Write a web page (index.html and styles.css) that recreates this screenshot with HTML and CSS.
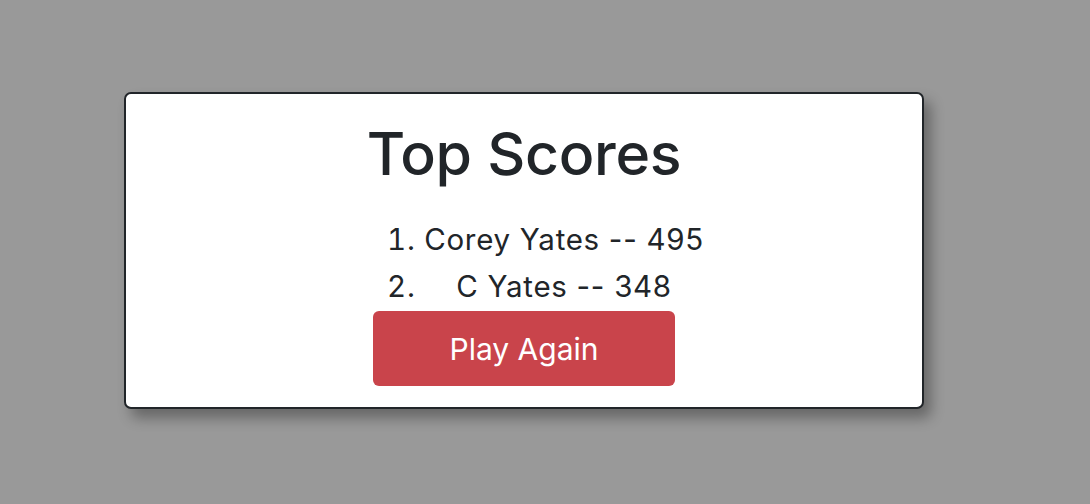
FILE: index.html
```html
<!DOCTYPE html>
<html>
<head>
<meta charset="utf-8">
<link rel="stylesheet" href="styles.css">
</head>
<body>
<div class="page">
  <div class="card">
    <h1 class="title">Top Scores</h1>
    <ol class="scores">
      <li>Corey Yates -- 495</li>
      <li>C Yates -- 348</li>
    </ol>
    <button class="btn-play">Play Again</button>
  </div>
</div>
</body>
</html>
```

FILE: styles.css
```css
html, body {
  margin: 0;
  padding: 0;
  background: #999999;
  font-family: Inter, "Liberation Sans", sans-serif;
  color: #212529;
}
.page {
  width: 1090px;
  height: 504px;
  padding-top: 92px;
  padding-left: 124px;
  box-sizing: border-box;
}
.card {
  width: 800px;
  height: 317px;
  box-sizing: border-box;
  background: #ffffff;
  border: 2px solid #212529;
  border-radius: 7px;
  box-shadow: 7px 9px 14px rgba(0, 0, 0, 0.33);
  display: flex;
  flex-direction: column;
  align-items: center;
  padding-top: 25px;
}
.title {
  margin: 0;
  font-size: 59px;
  font-weight: 500;
  line-height: 70px;
  letter-spacing: -0.3px;
}
.scores {
  margin: 27px 0 0 0;
  padding: 0 0 0 80px;
  width: fit-content;
  font-size: 29.5px;
  line-height: 47px;
  letter-spacing: 0.7px;
  text-align: center;
}
.btn-play {
  margin-top: 1px;
  width: 302px;
  height: 75px;
  background: #c9444b;
  color: #ffffff;
  border: none;
  border-radius: 6px;
  font-family: Inter, "Liberation Sans", sans-serif;
  font-size: 30px;
  font-weight: 400;
}
```
